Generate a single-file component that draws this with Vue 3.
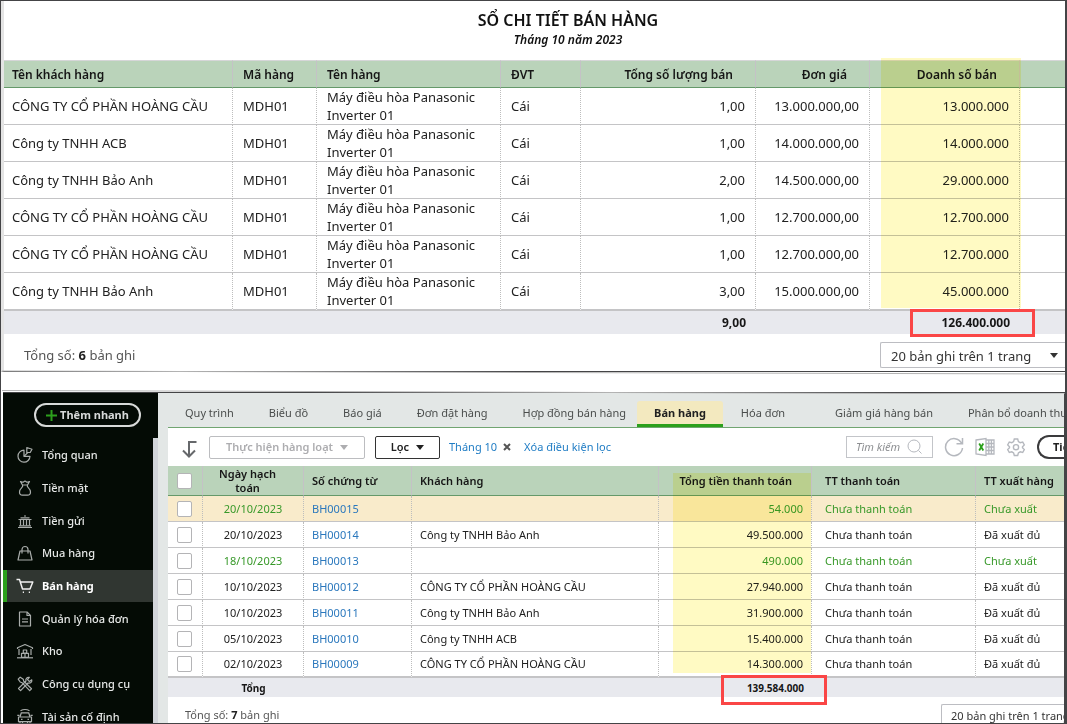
<script setup>
const product = 'Máy điều hòa Panasonic Inverter 01'

const sales = [
  { customer: 'CÔNG TY CỔ PHẦN HOÀNG CẦU', qty: '1,00', price: '13.000.000,00', total: '13.000.000' },
  { customer: 'Công ty TNHH ACB', qty: '1,00', price: '14.000.000,00', total: '14.000.000' },
  { customer: 'Công ty TNHH Bảo Anh', qty: '2,00', price: '14.500.000,00', total: '29.000.000' },
  { customer: 'CÔNG TY CỔ PHẦN HOÀNG CẦU', qty: '1,00', price: '12.700.000,00', total: '12.700.000' },
  { customer: 'CÔNG TY CỔ PHẦN HOÀNG CẦU', qty: '1,00', price: '12.700.000,00', total: '12.700.000' },
  { customer: 'Công ty TNHH Bảo Anh', qty: '3,00', price: '15.000.000,00', total: '45.000.000' },
]

const vouchers = [
  { date: '20/10/2023', code: 'BH00015', customer: '', amount: '54.000', out: 'Chưa xuất', open: true, picked: true },
  { date: '20/10/2023', code: 'BH00014', customer: 'Công ty TNHH Bảo Anh', amount: '49.500.000', out: 'Đã xuất đủ' },
  { date: '18/10/2023', code: 'BH00013', customer: '', amount: '490.000', out: 'Chưa xuất', open: true },
  { date: '10/10/2023', code: 'BH00012', customer: 'CÔNG TY CỔ PHẦN HOÀNG CẦU', amount: '27.940.000', out: 'Đã xuất đủ' },
  { date: '10/10/2023', code: 'BH00011', customer: 'Công ty TNHH Bảo Anh', amount: '31.900.000', out: 'Đã xuất đủ' },
  { date: '05/10/2023', code: 'BH00010', customer: 'Công ty TNHH ACB', amount: '15.400.000', out: 'Đã xuất đủ' },
  { date: '02/10/2023', code: 'BH00009', customer: 'CÔNG TY CỔ PHẦN HOÀNG CẦU', amount: '14.300.000', out: 'Đã xuất đủ' },
]

const tabs = [
  { label: 'Quy trình' },
  { label: 'Biểu đồ' },
  { label: 'Báo giá' },
  { label: 'Đơn đặt hàng' },
  { label: 'Hợp đồng bán hàng', kind: 'tight' },
  { label: 'Bán hàng', kind: 'active' },
  { label: 'Hóa đơn', kind: 'wide' },
  { label: 'Giảm giá hàng bán' },
  { label: 'Phân bổ doanh thu' },
]

const menu = [
  { label: 'Tổng quan', paths: ['M7 3.2A6 6 0 1 0 13 9.300H7Z', 'M7 9.300L10.800 5.500', 'M9.800 .5L15 2.300L13.200 5.500L9.800 5.500Z'] },
  { label: 'Tiền mặt', paths: ['M3.500 1.500L6 2.300L8 1L10 2.300L12.500 1.500L10.500 5H5.500Z', 'M5.500 5C7 7.500 2.500 8 2.500 12C2.500 14.500 4 15.200 5.500 15.200H10.500C12 15.200 13.500 14.500 13.500 12C13.500 8 9 7.500 10.500 5'] },
  { label: 'Tiền gửi', paths: ['M1.500 6.500H14.500M3.500 4.800H12.500M7 3H9', 'M3.500 7V12.500M6.500 7V12.500M9.500 7V12.500M12.500 7V12.500', 'M1 14.500H15M2 12.800H14'] },
  { label: 'Mua hàng', paths: ['M3 6H13L15 15H1Z', 'M5 8.500V4.500A3 3 0 0 1 11 4.500V8.500'] },
  { label: 'Bán hàng', active: true, paths: ['M-.5 1.500H2.500L5.500 11H13L15.800 4H3.500', 'M5.800 14.200H7M11.800 14.200H13'] },
  { label: 'Quản lý hóa đơn', paths: ['M2.500 1H10L13.500 4.500V15H2.500Z', 'M10 1.300V4.500H13.300', 'M5 8H11M5 10.800H11'] },
  { label: 'Kho', paths: ['M.5 6V4.800L8 1.500L15.500 4.800V6', 'M2 6V12M14 6V12', 'M0 14.800H16', 'M6.300 7H9.700V10H6.300ZM4.500 10.300H11.500V14.300H4.500ZM8 10.300V14.300'] },
  { label: 'Công cụ dụng cụ', paths: ['M1.200 3.200L3.200 1.200L6.300 3.300L6.600 5L14.500 12.800L12.700 14.700L5 6.700L3.200 6Z', 'M14.800 3.800L12.400 5.600L10.500 3.700L12.300 1.300C9.800 1 8.300 3 9 5L1.500 12.500L3.600 14.700L11 7C13.300 7.600 15.300 6 14.800 3.800Z'] },
  { label: 'Tài sản cố định', paths: ['M3.500 1.800Q8 -.8 12.500 1.800', 'M3 8L4.300 3.800H11.700L13 8', 'M1.500 8H14.500V12.700H1.500Z', 'M3 12.700V15.500H5.500V12.700M10.500 12.700V15.500H13V12.700', 'M4 10.400H5.500M10.500 10.400H12', 'M.3 6.300H2.500M13.500 6.300H15.700'] },
]
</script>

<template>
  <div class="page">
    <section class="report">
      <header class="report-head">
        <h1>SỔ CHI TIẾT BÁN HÀNG</h1>
        <p>Tháng 10 năm 2023</p>
      </header>

      <div class="table-wrap">
        <table class="grid sales">
          <colgroup>
            <col class="s1" /><col class="s2" /><col class="s3" /><col class="s4" />
            <col class="s5" /><col class="s6" /><col class="s7" /><col />
          </colgroup>
          <thead>
            <tr>
              <th>Tên khách hàng</th>
              <th>Mã hàng</th>
              <th>Tên hàng</th>
              <th>ĐVT</th>
              <th class="num">Tổng số lượng bán</th>
              <th class="num">Đơn giá</th>
              <th class="num">Doanh số bán</th>
              <th></th>
            </tr>
          </thead>
          <tbody>
            <tr v-for="(row, i) in sales" :key="i">
              <td>{{ row.customer }}</td>
              <td>MDH01</td>
              <td>{{ product }}</td>
              <td>Cái</td>
              <td class="num">{{ row.qty }}</td>
              <td class="num">{{ row.price }}</td>
              <td class="num">{{ row.total }}</td>
              <td></td>
            </tr>
          </tbody>
          <tfoot>
            <tr>
              <td colspan="5" class="num">9,00</td>
              <td></td>
              <td class="num marked">126.400.000<span class="frame"></span></td>
              <td></td>
            </tr>
          </tfoot>
        </table>
        <div class="highlight highlight-sales"></div>
      </div>

      <footer class="report-foot">
        <span>Tổng số: <b>6</b> bản ghi</span>
        <div class="pager">
          <select aria-label="Số bản ghi trên trang"><option>20 bản ghi trên 1 trang</option></select>
          <i class="caret"></i>
        </div>
      </footer>
    </section>

    <div class="divider">
      <svg viewBox="0 0 1064 24" preserveAspectRatio="none" aria-hidden="true">
        <path d="M0 1L1064 4M0 20.500L1064 24" fill="none" stroke="#b4b4b4" />
      </svg>
    </div>

    <section class="app">
      <aside class="sidebar">
        <button class="quick" type="button">
          <svg viewBox="0 0 11 11" aria-hidden="true"><path d="M5.500 0V11M0 5.500H11" /></svg>
          Thêm nhanh
        </button>
        <nav class="menu">
          <a v-for="item in menu" :key="item.label" href="#" :class="{ active: item.active }">
            <svg viewBox="0 0 16 16" aria-hidden="true">
              <path v-for="d in item.paths" :key="d" :d="d" />
            </svg>
            {{ item.label }}
          </a>
        </nav>
      </aside>

      <main class="content">
        <nav class="tabs">
          <a v-for="tab in tabs" :key="tab.label" href="#" :class="tab.kind">{{ tab.label }}</a>
        </nav>

        <div class="sheet">
          <div class="toolbar">
            <svg class="arrow" viewBox="0 0 16 18" aria-hidden="true"><path d="M15.500 2H8V16M2 10.500L8 16.500L14 10.500" /></svg>
            <button class="bulk" type="button" disabled>Thực hiện hàng loạt <i class="caret"></i></button>
            <button class="filter" type="button">Lọc <i class="caret"></i></button>
            <a class="link" href="#">Tháng 10</a>
            <button class="clear" type="button" aria-label="Bỏ lọc">
              <svg viewBox="0 0 8 8" aria-hidden="true"><path d="M1 1L7 7M7 1L1 7" /></svg>
            </button>
            <a class="link" href="#">Xóa điều kiện lọc</a>
            <div class="search">
              <input type="text" placeholder="Tìm kiếm" aria-label="Tìm kiếm" />
              <svg viewBox="0 0 16 16" aria-hidden="true"><circle cx="7" cy="7" r="6" /><path d="M11.500 11.500L14.500 14.500" /></svg>
            </div>
            <button class="tool" type="button" aria-label="Tải lại">
              <svg viewBox="0 0 20 20" aria-hidden="true"><path d="M17.500 6A8.500 8.500 0 1 0 18.500 11M18.500 1V6.800H12.500" stroke-width="1.500" /></svg>
            </button>
            <button class="tool" type="button" aria-label="Xuất Excel">
              <svg viewBox="0 0 20 20" aria-hidden="true">
                <path d="M11 3H19V17H11M11 6.500H19M11 10H19M11 13.500H19M13.800 3V17M16.400 3V17" />
                <path d="M1 3L11 1.500V18.500L1 17Z" fill="#fff" />
                <path class="mark" d="M4.200 6.500L8.300 13.500M8.300 6.500L4.200 13.500" />
              </svg>
            </button>
            <button class="tool" type="button" aria-label="Thiết lập">
              <svg viewBox="0 0 20 20" aria-hidden="true">
                <path d="M8.300 2H11.700L12.400 4.600L14.200 5.700L16.700 5L18.300 7.900L16.500 9.800V10.700L18.300 12.600L16.700 15.500L14.200 14.800L12.400 15.900L11.700 18.500H8.300L7.600 15.900L5.800 14.800L3.300 15.500L1.700 12.600L3.500 10.700V9.800L1.700 7.900L3.300 5L5.800 5.700L7.600 4.600Z" stroke-width="1.400" />
                <circle cx="10" cy="10.200" r="2.600" stroke-width="1.400" />
              </svg>
            </button>
            <button class="utility" type="button">Tiện ích</button>
          </div>

          <div class="table-wrap">
            <table class="grid vouchers">
              <colgroup>
                <col class="v1" /><col class="v2" /><col class="v3" /><col class="v4" />
                <col class="v5" /><col class="v6" /><col />
              </colgroup>
              <thead>
                <tr>
                  <th class="check"><input type="checkbox" aria-label="Chọn tất cả" /></th>
                  <th class="date">Ngày hạch toán</th>
                  <th>Số chứng từ</th>
                  <th>Khách hàng</th>
                  <th class="num">Tổng tiền thanh toán</th>
                  <th class="status">TT thanh toán</th>
                  <th>TT xuất hàng</th>
                </tr>
              </thead>
              <tbody>
                <tr v-for="row in vouchers" :key="row.code" :class="{ open: row.open, picked: row.picked }">
                  <td class="check"><input type="checkbox" :aria-label="row.code" /></td>
                  <td class="date">{{ row.date }}</td>
                  <td><a href="#">{{ row.code }}</a></td>
                  <td>{{ row.customer }}</td>
                  <td class="num">{{ row.amount }}</td>
                  <td class="status">Chưa thanh toán</td>
                  <td>{{ row.out }}</td>
                </tr>
              </tbody>
              <tfoot>
                <tr>
                  <td></td>
                  <td class="date">Tổng</td>
                  <td></td>
                  <td></td>
                  <td class="num marked">139.584.000<span class="frame"></span></td>
                  <td></td>
                  <td></td>
                </tr>
              </tfoot>
            </table>
            <div class="highlight highlight-vouchers"></div>
          </div>

          <footer class="sheet-foot">
            <span>Tổng số: <b>7</b> bản ghi</span>
            <select aria-label="Số bản ghi mỗi trang"><option>20 bản ghi trên 1 trang</option></select>
          </footer>
        </div>
      </main>
    </section>
  </div>
</template>

<style>
body {
  margin: 0;
  background: #fff;
}
</style>

<style scoped>
* {
  box-sizing: border-box;
}

.page {
  overflow: hidden;
  border: 1px solid #444446;
  border-right-width: 2px;
  background: #fff;
  color: #212121;
  font: 13px/18px "Noto Sans", "Open Sans", sans-serif;
}

a {
  color: inherit;
  text-decoration: none;
}

button,
select,
input {
  margin: 0;
  font: inherit;
  color: inherit;
}

/* Sales report */
.report {
  border-left: 3px solid #e4e4e4;
  border-bottom: 1px solid #444446;
}

.report-head {
  height: 59px;
  padding: 8px 0 0 67px;
  text-align: center;
}

.report-head h1 {
  margin: 0;
  font-size: 16px;
  line-height: 22px;
  font-weight: 600;
  color: #111;
}

.report-head p {
  margin: 0;
  font-size: 12px;
  line-height: 17px;
  font-weight: 600;
  font-style: italic;
  color: #111;
}

.table-wrap {
  position: relative;
}

.grid {
  width: 100%;
  table-layout: fixed;
  border-spacing: 0;
  border-collapse: separate;
}

.grid th,
.grid td {
  padding: 0 10px;
  border-right: 1px dotted #bdbdbd;
  border-bottom: 1px solid #c4c4c6;
  text-align: left;
  vertical-align: middle;
}

.grid th {
  border-right: 1px solid #c4c2c6;
  border-bottom: 1px solid #65996a;
  background: #bad3ba;
  font-weight: 600;
  color: #161616;
}

.grid tr > :last-child {
  border-right: 0;
}

.grid .num {
  text-align: right;
}

.grid tfoot td {
  border: 0;
  background: #e8e9ee;
  font-weight: 700;
  color: #161616;
}

.grid tbody tr:last-child td {
  border-bottom-width: 2px;
}

.marked {
  position: relative;
}

.frame {
  position: absolute;
  z-index: 2;
  border: 3px solid #fa4646;
}

.highlight {
  position: absolute;
  background: #fffac3;
  mix-blend-mode: multiply;
}

.sales .s1 { width: 229px; }
.sales .s2 { width: 84px; }
.sales .s3 { width: 184px; }
.sales .s4 { width: 80px; }
.sales .s5 { width: 175px; }
.sales .s6 { width: 114px; }
.sales .s7 { width: 150px; }

.sales th {
  height: 28px;
  padding-top: 2px;
  border-top: 1px solid #d6d6d8;
  font-size: 12px;
}

.sales th.num {
  padding-right: 22px;
}

.sales tr > :first-child {
  padding-left: 8px;
}

.sales tfoot td {
  height: 23px;
  font-size: 12px;
}

.sales .frame {
  inset: -2px -15px -3px 40px;
}

.highlight-sales {
  top: -2px;
  left: 877px;
  width: 140px;
  bottom: 26px;
}

.report-foot {
  display: flex;
  justify-content: space-between;
  height: 37px;
  padding: 8px 0 3px 20px;
  line-height: 26px;
  color: #555;
}

.report-foot b,
.sheet-foot b {
  font-weight: 700;
  color: #212121;
}

.pager {
  display: flex;
  align-items: center;
  position: relative;
  width: 185px;
}

.pager select {
  width: 100%;
  height: 26px;
  padding: 0 10px;
  border: 1px solid #bcbdc2;
  border-right: 0;
  border-radius: 2px 0 0 2px;
  background: #fff;
  appearance: none;
  color: #333;
}

.caret {
  display: inline-block;
  border: 4px solid transparent;
  border-top: 5px solid currentColor;
  border-bottom: 0;
}

.pager .caret {
  position: absolute;
  right: 7px;
  color: #333;
}

.divider {
  position: relative;
  height: 20px;
}

.divider svg {
  position: absolute;
  left: 1px;
  top: -2px;
  width: 100%;
  height: 24px;
}

/* Accounting app */
.app {
  display: flex;
  margin: 0 -1px 0 2px;
  border-top: 1px solid #444446;
  border-right: 2px solid #444446;
  font-size: 11px;
}

.sidebar {
  display: flex;
  flex: 0 0 155px;
  flex-direction: column;
  overflow: hidden;
  background: #040b05;
}

.quick {
  display: flex;
  align-items: center;
  justify-content: center;
  gap: 3px;
  flex: 0 0 24px;
  margin: 10px 17px 11px 31px;
  padding: 0;
  border: 2px solid #d8dad9;
  border-radius: 12px;
  background: none;
  font-weight: 700;
  color: #d8dad9;
}

.quick svg {
  width: 11px;
  height: 11px;
  stroke: #2ca01c;
  stroke-width: 2;
}

.menu {
  display: flex;
  flex: 1;
  flex-direction: column;
  margin-bottom: -10px;
  padding-top: 1px;
  border-right: 5px solid #d2d5da;
}

.menu a {
  display: flex;
  flex: 1;
  align-items: center;
  gap: 9px;
  padding-left: 14px;
  font-weight: 500;
  color: #e6e8e7;
  white-space: nowrap;
}

.menu a.active {
  padding-left: 10px;
  border-left: 4px solid #2ca01c;
  background: #303631;
  font-weight: 700;
  color: #fff;
}

.menu svg {
  flex: none;
  width: 16px;
  height: 16px;
  fill: none;
  stroke: #a9adab;
  stroke-width: 1.2;
  stroke-linejoin: round;
  overflow: visible;
}

.menu .active svg {
  stroke: #f0f0f0;
  stroke-width: 1.5;
}

.content {
  flex: 1;
  min-width: 0;
  padding-left: 10px;
  background: #e3e7e6;
}

.tabs {
  display: flex;
  align-items: flex-end;
  gap: 1px;
  height: 35px;
  overflow: hidden;
  border-bottom: 1px solid #71a571;
}

.tabs a {
  flex: none;
  padding: 0 17px 3px;
  line-height: 23px;
  color: #4a4d4c;
}

.tabs a.tight {
  padding-right: 10px;
}

.tabs a.wide {
  padding-right: 32px;
}

.tabs a.active {
  padding-bottom: 0;
  border-bottom: 3px solid #2ca01c;
  border-radius: 3px 3px 0 0;
  background: #f3e9bf;
  font-weight: 700;
  color: #212121;
}

.sheet {
  background: #fff;
}

.toolbar {
  display: flex;
  align-items: center;
  height: 38px;
  padding-left: 13px;
  overflow: hidden;
}

.toolbar button {
  flex: none;
  padding: 0;
  background: none;
}

.toolbar svg {
  fill: none;
  stroke: #b5b8be;
}

.toolbar .arrow {
  flex: none;
  width: 16px;
  height: 18px;
  margin: 4px 12px 0 0;
  stroke: #66686b;
  stroke-width: 2;
}

.toolbar .bulk,
.toolbar .filter {
  display: flex;
  align-items: center;
  justify-content: center;
  gap: 7px;
  width: 156px;
  height: 23px;
  border: 1px solid #bcbdc0;
  border-radius: 2px;
  font-weight: 600;
  color: #adadb0;
}

.toolbar .filter {
  width: 65px;
  margin: 0 9px 0 10px;
  border-color: #333;
  color: #212121;
}

.link {
  flex: none;
  color: #1f7cc4;
}

.toolbar .clear {
  display: flex;
  margin: 0 13px 0 6px;
  border: 0;
}

.clear svg {
  width: 8px;
  height: 8px;
  stroke: #555;
  stroke-width: 2;
}

.search {
  display: flex;
  align-items: center;
  flex: none;
  width: 87px;
  height: 22px;
  margin: 0 11px 0 auto;
  padding: 0 9px;
  border: 1px solid #c3c5c9;
}

.search input {
  flex: 1;
  width: 0;
  min-width: 0;
  padding: 0;
  border: 0;
  outline: 0;
  background: none;
}

.search input::placeholder {
  font-style: italic;
  color: #8d8f92;
  opacity: 1;
}

.search svg {
  flex: none;
  width: 16px;
  height: 16px;
}

.toolbar .tool {
  display: flex;
  width: 20px;
  margin-right: 11px;
  border: 0;
}

.tool svg {
  width: 20px;
  height: 20px;
  stroke-width: 1.3;
}

.tool .mark {
  stroke: #2ca01c;
  stroke-width: 1.8;
}

.toolbar .utility {
  width: 27px;
  height: 24px;
  padding-left: 14px;
  border: 2px solid #3a3a3c;
  border-right: 0;
  border-radius: 12px 0 0 12px;
  overflow: hidden;
  font-weight: 700;
  text-align: left;
  white-space: nowrap;
  color: #212121;
}

.vouchers .v1 { width: 35px; }
.vouchers .v2 { width: 101px; }
.vouchers .v3 { width: 108px; }
.vouchers .v4 { width: 247px; }
.vouchers .v5 { width: 153px; }
.vouchers .v6 { width: 164px; }

.vouchers th,
.vouchers td {
  height: 26px;
  padding: 0 8px;
}

.vouchers th {
  height: 30px;
  line-height: 14px;
}

.vouchers th.num {
  padding-right: 19px;
}

.vouchers .date {
  padding: 0 12px;
  text-align: center;
}

.vouchers th.date {
  padding-right: 23px;
}

.vouchers .check {
  padding: 0 0 0 9px;
}

.vouchers .status {
  padding-left: 13px;
}

.vouchers input {
  display: block;
  width: 15px;
  height: 16px;
  border: 1px solid #b4b4b6;
  border-radius: 2px;
  background: #fff;
  appearance: none;
}

.vouchers td a {
  color: #2b78bd;
}

.vouchers .picked td {
  background: #f9ebcb;
}

.vouchers .open td {
  color: #38992a;
}

.vouchers .open td a {
  color: #2b78bd;
}

.vouchers tfoot td {
  height: 19px;
  font-size: 10px;
  line-height: 18px;
}

.vouchers .frame {
  inset: -3px -15px -8px 62px;
}

.highlight-vouchers {
  top: 7px;
  left: 505px;
  width: 138px;
  bottom: 24px;
}

.sheet-foot {
  display: flex;
  justify-content: space-between;
  height: 26px;
  overflow: hidden;
  padding: 7px 0 0 17px;
  line-height: 22px;
  color: #555;
}

.sheet-foot select {
  width: 123px;
  height: 22px;
  padding: 0 0 0 9px;
  border: 1px solid #bcbdc2;
  border-right: 0;
  border-radius: 2px 0 0 0;
  background: #fff;
  appearance: none;
  color: #333;
}
</style>
